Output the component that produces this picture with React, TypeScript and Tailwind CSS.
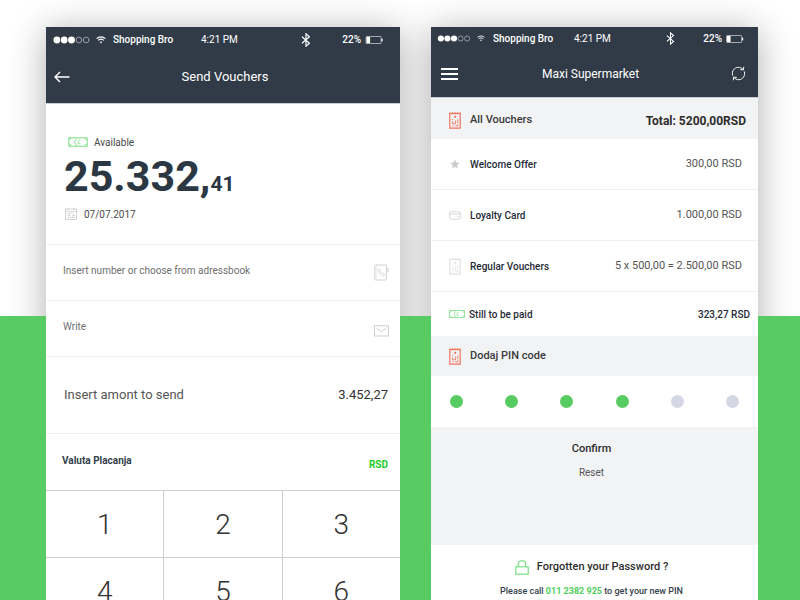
import React, { useState } from "react";

type IconProps = { className?: string };

function Wifi({ className }: IconProps) {
  return (
    <svg viewBox="0 0 10 8" className={className} fill="none" stroke="#fff" strokeWidth="1.1" aria-hidden="true">
      <path d="M0.6 2.6C3 0.3 7 0.3 9.4 2.6" />
      <path d="M2.2 4.4C3.8 2.9 6.2 2.9 7.8 4.4" />
      <path d="M3.8 6L5 7.4L6.2 6C5.5 5.3 4.5 5.3 3.8 6Z" fill="#fff" stroke="none" />
    </svg>
  );
}

function Bluetooth({ className }: IconProps) {
  return (
    <svg viewBox="0 0 10 14" className={className} fill="none" stroke="#fff" strokeWidth="1.2" aria-hidden="true">
      <path d="M1 3.8L8.4 10.2L5 13.2V0.8L8.4 3.8L1 10.2" />
    </svg>
  );
}

function Battery({ className }: IconProps) {
  return (
    <svg viewBox="0 0 20 9" className={className} fill="none" aria-hidden="true">
      <rect x="0.5" y="0.5" width="17" height="8" rx="0.8" stroke="#b9bfc6" />
      <rect x="1" y="1" width="4" height="7" fill="#fff" />
      <path d="M18.5 3V6" stroke="#fff" strokeWidth="1.4" />
    </svg>
  );
}

function Banknote({ className }: IconProps) {
  return (
    <svg viewBox="0 0 20 10" className={className} fill="none" stroke="#6fdc78" strokeWidth="0.9" aria-hidden="true">
      <rect x="0.8" y="0.8" width="18.4" height="8.4" />
      <path d="M0.8 2.6H2.6V0.8M17.4 0.8V2.6H19.2M0.8 7.4H2.6V9.2M17.4 9.2V7.4H19.2" strokeWidth="0.6" />
      <path d="M9.4 1.2C6 2.6 6 7.4 9.4 8.8M12.4 3.2C10.8 2.8 10.2 3.8 10.6 5.2L10.2 6.8H12.4" strokeWidth="0.8" />
    </svg>
  );
}

function Calendar({ className }: IconProps) {
  return (
    <svg viewBox="0 0 12 12" className={className} fill="none" stroke="#c9c9c9" strokeWidth="0.8" aria-hidden="true">
      <rect x="0.5" y="1" width="11" height="10.5" />
      <path d="M0.5 3.6H11.5M3 0V2.2M9 0V2.2M2.4 5.6H6.4M2.4 7.4H5.4M2.4 9.4H9.6M7.4 5.4L9.6 7.6M7.2 7.8H9.6" />
    </svg>
  );
}

function AddressBook({ className }: IconProps) {
  return (
    <svg viewBox="0 0 15 17" className={className} fill="none" stroke="#d2d2d2" strokeWidth="1" aria-hidden="true">
      <rect x="0.8" y="1" width="11.6" height="15" rx="0.8" />
      <path d="M2.2 1V16" strokeWidth="0.5" />
      <path d="M12.4 4.4H14.2V8H12.4M12.4 6.2H14.2" strokeWidth="0.8" />
      <path d="M4 5.4L5 4.8L6.4 6.6L5.8 7.6L8 9.8L9 9.2L10.8 10.6L10 12C7 12 3.8 8.6 4 5.4Z" strokeWidth="0.8" />
    </svg>
  );
}

function Envelope({ className }: IconProps) {
  return (
    <svg viewBox="0 0 15 12" className={className} fill="none" stroke="#cfcfcf" strokeWidth="1" aria-hidden="true">
      <rect x="0.5" y="0.8" width="14" height="10.2" />
      <path d="M2.4 3L7.5 6.6L12.6 3" />
    </svg>
  );
}

function Voucher({ className, color }: IconProps & { color: string }) {
  return (
    <svg viewBox="0 0 12 17" className={className} fill="none" stroke={color} strokeWidth="1" aria-hidden="true">
      <path d="M0.8 0.4V16.2H11.2V0.4" strokeWidth="1.2" />
      <path d="M0.8 1.6H11.2" strokeWidth="1.2" />
      <path d="M2.8 0.6H4M5.4 0.6H6.6M8 0.6H9.2" strokeWidth="1" />
      <path d="M6.2 3.4L7.6 4.8L6.2 6.2L4.8 4.8Z" fill={color} stroke="none" />
      <path d="M3.6 7V8.2M3.6 9.4V11.8H6.6V8.4M8.8 7.4V11.2M6.4 13.8H8.8V12.2M3.4 13.8H4.8" strokeWidth="0.9" />
    </svg>
  );
}

function Star({ className }: IconProps) {
  return (
    <svg viewBox="0 0 10 10" className={className} fill="#cbcbcb" aria-hidden="true">
      <path d="M5 0.4L6.3 3.6L9.7 3.9L7.1 6.1L7.9 9.5L5 7.7L2.1 9.5L2.9 6.1L0.3 3.9L3.7 3.6Z" />
    </svg>
  );
}

function Card({ className }: IconProps) {
  return (
    <svg viewBox="0 0 12 9" className={className} fill="none" stroke="#d4d4d4" strokeWidth="0.9" aria-hidden="true">
      <rect x="0.6" y="0.8" width="10.8" height="7.4" rx="1.2" />
      <path d="M0.6 3H11.4M8 5.8H9.8" />
    </svg>
  );
}

function Refresh({ className }: IconProps) {
  return (
    <svg viewBox="0 0 16 16" className={className} fill="none" stroke="#fff" strokeWidth="1" aria-hidden="true">
      <path d="M1.8 10.2C0.4 5.4 3.6 1.6 7.6 1.4C9.8 1.3 11.6 2.2 12.9 3.8M13.6 0.8L13.2 4.2L9.8 3.8" />
      <path d="M14.2 5.8C15.6 10.6 12.4 14.4 8.4 14.6C6.2 14.7 4.4 13.8 3.1 12.2M2.4 15.2L2.8 11.8L6.2 12.2" />
    </svg>
  );
}

function Lock({ className }: IconProps) {
  return (
    <svg viewBox="0 0 14 15" className={className} fill="none" stroke="#6fdc78" strokeWidth="1.1" aria-hidden="true">
      <rect x="0.8" y="6.8" width="12.4" height="7.4" />
      <path d="M3.2 6.8V4.4C3.2 -0.4 10.8 -0.4 10.8 4.4V6.8" />
    </svg>
  );
}

function BackArrow({ className }: IconProps) {
  return (
    <svg viewBox="0 0 16 12" className={className} fill="none" stroke="#fff" strokeWidth="1.4" aria-hidden="true">
      <path d="M15.5 6H1.4M6 1L1 6L6 11" />
    </svg>
  );
}

function Signal({ small }: { small?: boolean }) {
  return (
    <svg viewBox="0 0 38 8" className={small ? "h-[7px] w-[34px]" : "h-2 w-[37px]"} aria-hidden="true">
      {[4, 11.5, 19].map((x) => (
        <circle key={x} cx={x} cy="4" r="3.5" fill="#fff" />
      ))}
      {[26.5, 34].map((x) => (
        <circle key={x} cx={x} cy="4" r="2.9" fill="none" stroke="#cdd1d6" strokeWidth="0.7" />
      ))}
    </svg>
  );
}

function Phone({ label, children }: { label: string; children: React.ReactNode }) {
  return (
    <section aria-label={label} className="relative">
      <div className="absolute inset-0 z-0 shadow-[0_4px_34px_rgba(0,0,0,0.32)]" />
      <div className="relative z-20 flex h-full flex-col bg-white">{children}</div>
    </section>
  );
}

function SendVouchers() {
  const [amount, setAmount] = useState("3.452,27");
  return (
    <Phone label="Send Vouchers">
      <header className="h-[77px] border-b border-[#c9ccd0] bg-[#313b48] text-white">
        <div className="flex h-[25px] items-center pl-[7px] pr-4 text-[10px]">
          <Signal />
          <Wifi className="ml-1.5 h-2 w-2.5" />
          <span className="ml-[7px] w-[88px] font-medium">Shopping Bro</span>
          <span>4:21 PM</span>
          <Bluetooth className="ml-auto h-3.5 w-2.5" />
          <span className="ml-[31px] font-medium">22%</span>
          <Battery className="ml-1 h-2 w-[19px]" />
        </div>
        <div className="grid h-[50px] grid-cols-[24px_1fr_20px] items-center px-2">
          <button type="button" aria-label="Back">
            <BackArrow className="h-3 w-4" />
          </button>
          <h1 className="text-center text-[13px]">Send Vouchers</h1>
        </div>
      </header>

      <div className="h-[141px] border-b border-[#f0f0f2] pl-[18px] pt-[30px] text-[#4a4a4a]">
        <div className="flex h-4 items-center pl-1 text-[10px]">
          <Banknote className="mr-1.5 h-2.5 w-5" />
          Available
        </div>
        <p className="h-[54px] text-[43px]/[52px] font-bold text-[#2c3744]">
          25.332,<span className="text-[21px]">41</span>
        </p>
        <div className="flex h-5 items-center pl-px text-[10px]">
          <Calendar className="mr-[7px] h-3 w-3" />
          07/07.2017
        </div>
      </div>

      <div className="flex h-14 items-center border-b border-[#f0f0f2] pl-[17px] pr-[11px]">
        <input
          aria-label="Number"
          placeholder="Insert number or choose from adressbook"
          className="mb-1 min-w-0 flex-1 text-[10px] outline-none placeholder:text-[#6f6f6f]"
        />
        <button type="button" aria-label="Open address book">
          <AddressBook className="h-[17px] w-[15px]" />
        </button>
      </div>
      <div className="flex h-14 items-center border-b border-[#f0f0f2] pl-[17px] pr-[11px]">
        <input
          aria-label="Message"
          placeholder="Write"
          className="mb-1 min-w-0 flex-1 text-[10px] outline-none placeholder:text-[#6f6f6f]"
        />
        <button type="button" aria-label="Send message" className="pt-1">
          <Envelope className="h-3 w-[15px]" />
        </button>
      </div>
      <div className="flex h-[77px] items-center border-b border-[#f0f0f2] pl-[18px] pr-3">
        <label htmlFor="amount" className="flex-1 text-[13px] text-[#555]">
          Insert amont to send
        </label>
        <input
          id="amount"
          value={amount}
          onChange={(e) => setAmount(e.target.value)}
          className="w-24 text-right text-[13px] text-[#333] outline-none"
        />
      </div>
      <div className="flex h-14 items-center justify-between pl-4 pr-3 text-[10px] font-bold">
        <span className="mb-1 text-[#333e4b]">Valuta Placanja</span>
        <span className="pt-1 text-[#25cc25]">RSD</span>
      </div>

      <div className="grid auto-rows-[66px] grid-cols-3 gap-px border-t border-[#cfcfd3] bg-[#cfcfd3]">
        {["1", "2", "3", "4", "5", "6"].map((n) => (
          <button key={n} type="button" className="bg-white pt-0.5 text-[28px] font-light text-[#333]">
            {n}
          </button>
        ))}
      </div>
    </Phone>
  );
}

function Row({ icon, name, value }: { icon: React.ReactNode; name: string; value: string }) {
  return (
    <li className="flex h-[51px] items-center border-b border-[#f0f0f2] pl-[18px] pr-4">
      <span className="flex w-[21px] items-center">{icon}</span>
      <span className="flex-1 text-[10px] font-medium text-[#1f2b38]">{name}</span>
      <span className="text-[11px] text-[#555]">{value}</span>
    </li>
  );
}

function Supermarket() {
  const pin = [true, true, true, true, false, false];
  return (
    <Phone label="Maxi Supermarket">
      <header className="h-[71px] border-b border-[#c9ccd0] bg-[#313b48] text-white">
        <div className="flex h-[23px] items-center pl-1.5 pr-3.5 text-[10px]">
          <Signal small />
          <Wifi className="ml-1.5 h-[7px] w-2" />
          <span className="ml-2 w-[81px] font-medium">Shopping Bro</span>
          <span>4:21 PM</span>
          <Bluetooth className="ml-auto h-[13px] w-[9px]" />
          <span className="ml-7 font-medium">22%</span>
          <Battery className="ml-1 h-2 w-[18px]" />
        </div>
        <div className="grid h-[47px] grid-cols-[18px_1fr_24px] items-center pl-2.5 pr-3">
          <button type="button" aria-label="Menu" className="flex flex-col gap-[3px]">
            <span className="h-0.5 w-[17px] bg-white" />
            <span className="h-0.5 w-[17px] bg-white" />
            <span className="h-0.5 w-[17px] bg-white" />
          </button>
          <h1 className="text-center text-[12px]">Maxi Supermarket</h1>
          <button type="button" aria-label="Refresh" className="justify-self-end">
            <Refresh className="h-[15px] w-[15px]" />
          </button>
        </div>
      </header>

      <div className="flex h-[41px] items-center bg-[#f2f3f5] pl-[18px] pr-3 pt-1">
        <Voucher color="#f2765e" className="mr-[9px] h-[17px] w-3" />
        <h2 className="flex-1 text-[11px] font-medium text-[#3a3a3a]">All Vouchers</h2>
        <span className="text-[12px] font-bold text-[#2d2d2d]">Total: 5200,00RSD</span>
      </div>

      <ul>
        <Row icon={<Star className="ml-px h-2.5 w-2.5" />} name="Welcome Offer" value="300,00 RSD" />
        <Row icon={<Card className="h-[9px] w-3" />} name="Loyalty Card" value="1.000,00 RSD" />
        <Row
          icon={<Voucher color="#e2e2e2" className="h-[17px] w-3" />}
          name="Regular Vouchers"
          value="5 x 500,00 = 2.500,00 RSD"
        />
      </ul>
      <div className="flex h-11 items-center pl-[18px] pr-2 text-[10px] font-medium text-[#1f2b38]">
        <Banknote className="mr-1 h-2 w-4" />
        <span className="flex-1">Still to be paid</span>
        <span>323,27 RSD</span>
      </div>

      <div className="flex h-10 items-center bg-[#f2f3f5] pl-[18px]">
        <Voucher color="#f2765e" className="mr-[9px] h-[17px] w-3" />
        <h2 className="text-[11px] font-medium text-[#3a3a3a]">Dodaj PIN code</h2>
      </div>
      <div role="img" aria-label="4 of 6 digits entered" className="flex h-[51px] items-center justify-between px-[19px]">
        {pin.map((filled, i) => (
          <span key={i} className={filled ? "size-[13px] rounded-full bg-[#57cb61]" : "size-[13px] rounded-full bg-[#d5d6e4]"} />
        ))}
      </div>

      <div className="flex h-[118px] flex-col items-center gap-2 bg-[#f2f3f5] pr-1.5 pt-3.5">
        <button type="button" className="h-4 text-[11px]/4 font-medium text-[#2d2d2d]">
          Confirm
        </button>
        <button type="button" className="h-4 text-[10px]/4 text-[#555]">
          Reset
        </button>
      </div>

      <footer className="flex flex-col items-center gap-2 pr-1.5 pt-3.5">
        <a href="#password" className="flex h-4 items-center gap-2 text-[11px]/4 font-medium text-[#2d2d2d]">
          <Lock className="h-[15px] w-3.5" />
          Forgotten your Password ?
        </a>
        <p className="text-[9px]/4 font-medium text-[#333e4b]">
          Please call{" "}
          <a href="tel:0112382925" className="font-bold text-[#4fd05a]">
            011 2382 925
          </a>{" "}
          to get your new PIN
        </p>
      </footer>
    </Phone>
  );
}

export default function App() {
  return (
    <main className="relative isolate h-screen overflow-hidden bg-white font-['Roboto',sans-serif]">
      <div className="absolute inset-x-0 bottom-0 top-[316px] z-10 bg-[#58cc62]" />
      <div className="grid min-h-screen grid-cols-[354fr_327fr] gap-[31px] pl-[46px] pr-[42px] pt-[27px]">
        <SendVouchers />
        <Supermarket />
      </div>
    </main>
  );
}
